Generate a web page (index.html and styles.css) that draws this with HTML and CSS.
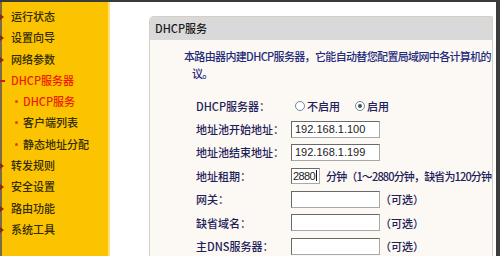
FILE: index.html
```html
<!DOCTYPE html>
<html lang="zh-CN">
<head>
<meta charset="utf-8">
<title>DHCP服务</title>
<link rel="stylesheet" href="styles.css">
</head>
<body>
<div class="screen">
  <div class="topbar"></div>
  <div class="main">
    <nav class="sidebar">
      <ul class="menu">
        <li class="item"><span class="mark"></span>运行状态</li>
        <li class="item"><span class="mark"></span>设置向导</li>
        <li class="item"><span class="mark"></span>网络参数</li>
        <li class="item active"><span class="mark dash"></span>DHCP服务器</li>
        <li class="sub active"><span class="dot"></span>DHCP服务</li>
        <li class="sub"><span class="dot"></span>客户端列表</li>
        <li class="sub"><span class="dot"></span>静态地址分配</li>
        <li class="item"><span class="mark"></span>转发规则</li>
        <li class="item"><span class="mark"></span>安全设置</li>
        <li class="item"><span class="mark"></span>路由功能</li>
        <li class="item"><span class="mark"></span>系统工具</li>
      </ul>
    </nav>
    <div class="content">
      <section class="panel">
        <header class="panel-head">DHCP服务</header>
        <div class="panel-body">
          <p class="desc">本路由器内建DHCP服务器，它能自动替您配置局域网中各计算机的<br>议。</p>
          <div class="form">
            <div class="row">
              <span class="label">DHCP服务器：</span>
              <span class="field">
                <label class="opt"><input type="radio" name="dhcp" class="radio">不启用</label>
                <label class="opt"><input type="radio" name="dhcp" class="radio" checked>启用</label>
              </span>
            </div>
            <div class="row">
              <span class="label">地址池开始地址：</span>
              <span class="field"><input class="text" type="text" value="192.168.1.100"></span>
            </div>
            <div class="row">
              <span class="label">地址池结束地址：</span>
              <span class="field"><input class="text" type="text" value="192.168.1.199"></span>
            </div>
            <div class="row">
              <span class="label">地址租期：</span>
              <span class="field"><input class="text short" type="text" value="2880"><span class="cursor"></span><span class="hint">分钟（1～2880分钟，缺省为120分钟</span></span>
            </div>
            <div class="row">
              <span class="label">网关：</span>
              <span class="field"><input class="text" type="text" value=""><span class="note">（可选）</span></span>
            </div>
            <div class="row">
              <span class="label">缺省域名：</span>
              <span class="field"><input class="text" type="text" value=""><span class="note">（可选）</span></span>
            </div>
            <div class="row">
              <span class="label">主DNS服务器：</span>
              <span class="field"><input class="text" type="text" value=""><span class="note">（可选）</span></span>
            </div>
          </div>
        </div>
      </section>
    </div>
    <div class="edge"></div>
  </div>
</div>
</body>
</html>
```

FILE: styles.css
```css
* { box-sizing: border-box; }
html, body { margin: 0; padding: 0; }
body {
  width: 500px;
  height: 256px;
  overflow: hidden;
  background: #ffffff;
  font-family: "Noto Sans CJK SC", "Noto Sans", sans-serif;
  font-size: 11px;
  font-weight: 500;
}
.screen {
  width: 500px;
  height: 256px;
  display: flex;
  flex-direction: column;
  overflow: hidden;
}
.topbar {
  height: 2px;
  flex: none;
  background: #3a3a3a;
}
.main {
  flex: 1;
  display: flex;
  min-height: 0;
}
.sidebar {
  width: 110px;
  flex: none;
  background: #fcc400;
  border-left: 2px solid #7a6a48;
  border-right: 2px solid #ffe07a;
  padding-top: 4px;
}
.menu {
  list-style: none;
  margin: 0;
  padding: 0;
}
.item, .sub {
  position: relative;
  height: 21.3px;
  line-height: 21.3px;
  color: #332c00;
  white-space: nowrap;
}
.item { padding-left: 9px; }
.sub { padding-left: 21px; }
.active { color: #ee1a00; }
.mark {
  position: absolute;
  left: -2px;
  top: 8px;
  width: 0;
  height: 0;
  border-top: 3px solid transparent;
  border-bottom: 3px solid transparent;
  border-left: 4px solid #8a2a10;
}
.mark.dash {
  top: 10px;
  width: 5px;
  height: 2px;
  border: none;
  background: #c8200a;
}
.dot {
  position: absolute;
  left: 13px;
  top: 9px;
  width: 3px;
  height: 3px;
  border-radius: 50%;
  background: #e8400a;
}
.content {
  flex: 1;
  padding: 14px 3px 0 39px;
  min-width: 0;
}
.panel {
  height: 100%;
  border: 1px solid #d8cfc2;
  border-bottom: none;
  border-radius: 5px 2px 0 0;
  background: #fcf8f4;
}
.panel-head {
  height: 23px;
  line-height: 23px;
  padding-left: 5px;
  background: #d9d9d9;
  border-radius: 4px 1px 0 0;
  color: #1a1a1a;
}
.panel-body {
  padding-top: 8px;
}
.desc {
  margin: 0;
  padding-left: 42px;
  text-indent: -8px;
  line-height: 17px;
  color: #232a7a;
  white-space: nowrap;
  letter-spacing: -0.65px;
}
.form {
  padding-top: 12px;
}
.row {
  display: grid;
  grid-template-columns: 95px 1fr;
  align-items: center;
  height: 23.4px;
  padding-left: 46px;
  color: #1c2158;
  white-space: nowrap;
}
.field {
  display: flex;
  align-items: center;
}
.opt {
  display: inline-flex;
  align-items: center;
  margin-left: 4px;
  margin-right: 11px;
}
.radio {
  appearance: none;
  -webkit-appearance: none;
  margin: 0 2px 0 0;
  width: 10px;
  height: 10px;
  border: 1px solid #6f88a6;
  border-radius: 50%;
  background: #ffffff;
  display: inline-grid;
  place-items: center;
}
.radio:checked::before {
  content: "";
  width: 4px;
  height: 4px;
  border-radius: 50%;
  background: #3e5a3a;
}
.text {
  width: 89px;
  height: 17px;
  margin: 0;
  padding: 0 3px;
  border: 1px solid #6a6a6a;
  border-right-color: #a8a8a8;
  border-bottom-color: #a8a8a8;
  background: #ffffff;
  font-family: "Liberation Sans", sans-serif;
  font-size: 11px;
  font-weight: 400;
  color: #222222;
  outline: none;
}
.text.short {
  width: 29px;
  height: 16px;
  padding: 0 1px;
  letter-spacing: -0.6px;
}
.cursor {
  width: 1px;
  height: 11px;
  margin-left: -4px;
  margin-right: 3px;
  background: #111111;
}
.hint {
  margin-left: 6px;
  letter-spacing: -0.85px;
}
.edge {
  width: 4px;
  flex: none;
  background: #3c3c3c;
}
```
